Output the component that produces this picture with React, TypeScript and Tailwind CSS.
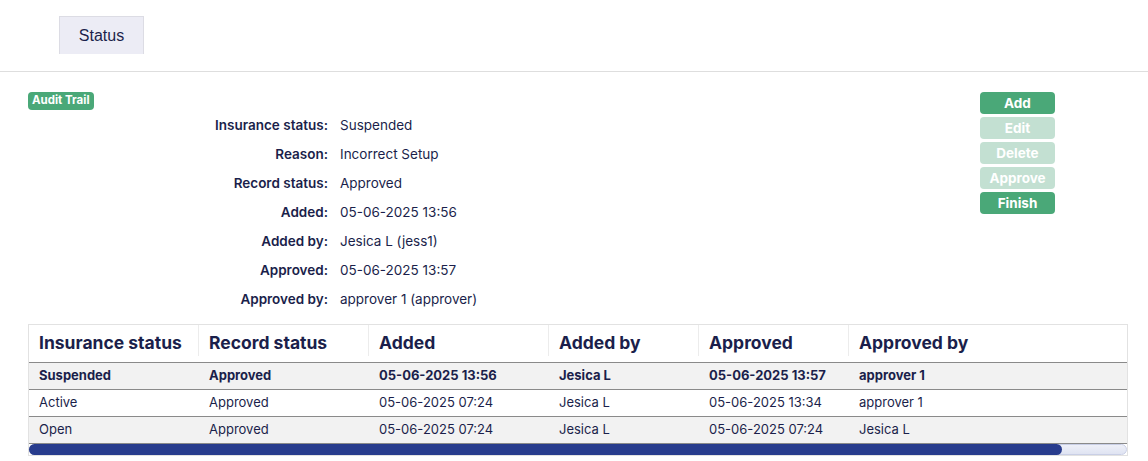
import React from "react";

const details: [string, string][] = [
  ["Insurance status:", "Suspended"],
  ["Reason:", "Incorrect Setup"],
  ["Record status:", "Approved"],
  ["Added:", "05-06-2025 13:56"],
  ["Added by:", "Jesica L (jess1)"],
  ["Approved:", "05-06-2025 13:57"],
  ["Approved by:", "approver 1 (approver)"],
];

const headers = ["Insurance status", "Record status", "Added", "Added by", "Approved", "Approved by"];
const widths = ["w-[170px]", "w-[170px]", "w-[180px]", "w-[150px]", "w-[150px]", ""];

const rows: string[][] = [
  ["Suspended", "Approved", "05-06-2025 13:56", "Jesica L", "05-06-2025 13:57", "approver 1"],
  ["Active", "Approved", "05-06-2025 07:24", "Jesica L", "05-06-2025 13:34", "approver 1"],
  ["Open", "Approved", "05-06-2025 07:24", "Jesica L", "05-06-2025 07:24", "Jesica L"],
];

export default function App() {
  return (
    <div className="w-[1148px] h-[461px] bg-white text-[#1b1f4b] font-['Inter','Noto_Sans',sans-serif] overflow-hidden">
      <div className="pt-[16px] pl-[59px] h-[72px] border-b border-[#dedede]">
        <div className="w-[85px] h-[38px] bg-[#ececf5] border border-b-0 border-[#dcdce4] flex items-center justify-center text-[16px] text-[#1b1f4b] font-['Liberation_Sans',Arial,sans-serif]">
          Status
        </div>
      </div>

      <div className="pl-[28px] pr-[20px] pt-[20px]">
        <div className="flex">
          <div className="flex-1">
            <div className="flex w-fit h-[18px] mb-[1px] items-center px-[4px] rounded-[4px] bg-[#4aa878] text-white text-[11.5px] font-bold leading-none">
              Audit Trail
            </div>
            <div className="grid grid-cols-[300px_1fr] gap-x-[12px] text-[13.5px]">
              {details.map(([l, v]) => (
                <React.Fragment key={l}>
                  <div className="h-[29px] flex items-center justify-end font-semibold">{l}</div>
                  <div className="h-[29px] flex items-center">{v}</div>
                </React.Fragment>
              ))}
            </div>
          </div>
          <div className="w-[75px] mr-[73px] flex flex-col gap-[3px]">
            {[
              ["Add", true],
              ["Edit", false],
              ["Delete", false],
              ["Approve", false],
              ["Finish", true],
            ].map(([t, on]) => (
              <div
                key={t as string}
                className={`h-[22px] rounded-[4px] flex items-center justify-center text-white text-[13.5px] font-bold ${
                  on ? "bg-[#4aa878]" : "bg-[#c3e0d2]"
                }`}
              >
                {t as string}
              </div>
            ))}
          </div>
        </div>

        <div className="mt-[10px] w-[1100px] border border-[#e2e2e2]">
          <table className="w-full table-fixed border-collapse">
            <colgroup>
              {widths.map((w, i) => (
                <col key={i} className={w} />
              ))}
            </colgroup>
            <thead>
              <tr className="h-[37px] border-b border-[#8a8a8a]">
                {headers.map((h, i) => (
                  <th key={h} className="relative text-left px-[10px] text-[17.5px] font-bold">
                    {h}
                    {i < headers.length - 1 && (
                      <span className="absolute right-0 top-0 bottom-[6px] w-px bg-[#ececec]" />
                    )}
                  </th>
                ))}
              </tr>
            </thead>
            <tbody>
              {rows.map((r, ri) => (
                <tr
                  key={ri}
                  className={`h-[27px] border-b border-[#8a8a8a] ${ri % 2 === 0 ? "bg-[#f2f2f2]" : "bg-white"} ${
                    ri === 0 ? "font-bold" : ""
                  }`}
                >
                  {r.map((c, ci) => (
                    <td key={ci} className="px-[10px] text-[13px] whitespace-nowrap">
                      {c}
                    </td>
                  ))}
                </tr>
              ))}
            </tbody>
          </table>
          <div className="h-[11px] relative bg-[linear-gradient(#eef0f8,#dfe3f2)] rounded-full border border-[#c9cfe6]">
            <div className="absolute left-[-1px] top-[-1px] bottom-[-1px] w-[1033px] rounded-full bg-[#283c8d]" />
          </div>
        </div>
      </div>
    </div>
  );
}
